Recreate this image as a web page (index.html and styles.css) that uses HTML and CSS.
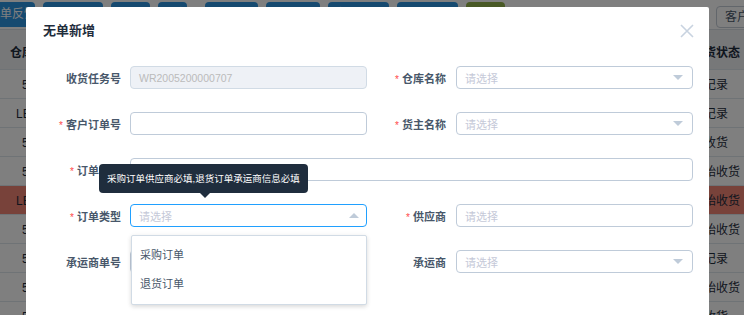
FILE: index.html
```html
<!DOCTYPE html>
<html lang="zh-CN">
<head>
    <meta charset="UTF-8">
    <meta name="viewport" content="width=device-width, initial-scale=1.0">
    <link rel="stylesheet" href="styles.css">
    <title>无单新增</title>
</head>

<body>
    <div class="page">
        <div class="toolbar">
            <div class="btns">
                <span class="btn btn-first">订单反馈</span>
                <span class="btn btn-w60">新增收货</span>
                <span class="btn btn-w39">编辑</span>
                <span class="btn btn-w29">删除</span>
                <span class="btn btn-w53 btn-far">无单新增</span>
                <span class="btn btn-w54">开始收货</span>
                <span class="btn btn-w61">完成收货</span>
                <span class="btn btn-w61">打印单据</span>
                <span class="btn btn-green">导出</span>
            </div>
            <span class="btn-plain">客户订单</span>
        </div>

        <table class="grid">
            <colgroup>
                <col class="col-first">
                <col>
                <col class="col-last">
            </colgroup>
            <thead>
                <tr><th class="c-first">仓库名称</th><th></th><th>收货状态</th></tr>
            </thead>
            <tbody>
                <tr><td class="c-five">5号仓库</td><td></td><td>记录</td></tr>
                <tr><td class="c-le">LE仓库</td><td></td><td>记录</td></tr>
                <tr><td class="c-five">5号仓库</td><td></td><td>收货</td></tr>
                <tr><td class="c-five">5号仓库</td><td></td><td>开始收货</td></tr>
                <tr class="row-warn"><td class="c-le">LE仓库</td><td></td><td>开始收货</td></tr>
                <tr><td class="c-five">5号仓库</td><td></td><td>开始收货</td></tr>
                <tr><td class="c-five">5号仓库</td><td></td><td>记录</td></tr>
                <tr><td class="c-five">5号仓库</td><td></td><td>开始收货</td></tr>
                <tr><td class="c-five">5号仓库</td><td></td><td>收货</td></tr>
            </tbody>
        </table>
    </div>

    <div class="mask"></div>

    <div class="dialog">
        <div class="dialog-header">
            <span class="dialog-title">无单新增</span>
            <svg class="close" width="14" height="14" viewBox="0 0 14 14">
                <path d="M1 1 L13 13 M13 1 L1 13" stroke="#c8d3e0" stroke-width="1.6" fill="none"/>
            </svg>
        </div>

        <form class="form">
            <label class="label">收货任务号</label>
            <div class="input disabled">WR2005200000707</div>
            <label class="label label-right req">仓库名称</label>
            <div class="input select"><span class="ph">请选择</span><i class="caret"></i></div>

            <label class="label req">客户订单号</label>
            <div class="input"></div>
            <label class="label label-right req">货主名称</label>
            <div class="input select"><span class="ph">请选择</span><i class="caret"></i></div>

            <label class="label req">订单备注</label>
            <div class="input span-3"></div>

            <label class="label req">订单类型</label>
            <div class="input select focus">
                <span class="ph">请选择</span><i class="caret caret-up"></i>
                <div class="tooltip">采购订单供应商必填,退货订单承运商信息必填</div>
                <ul class="dropdown">
                    <li>采购订单</li>
                    <li>退货订单</li>
                </ul>
            </div>
            <label class="label label-right req">供应商</label>
            <div class="input"><span class="ph">请选择</span></div>

            <label class="label">承运商单号</label>
            <div class="input"></div>
            <label class="label label-right">承运商</label>
            <div class="input select"><span class="ph">请选择</span><i class="caret"></i></div>
        </form>
    </div>
</body>
</html>
```

FILE: styles.css
```css
* {
    box-sizing: border-box;
}

body {
    margin: 0;
    width: 744px;
    height: 315px;
    overflow: hidden;
    background: #fff;
    font-family: "Liberation Sans", "Noto Sans CJK SC", sans-serif;
    color: #1f2d3d;
}

/* page behind the dialog */
.toolbar {
    display: flex;
    justify-content: space-between;
    align-items: flex-start;
    height: 30px;
    padding-top: 2px;
    border-bottom: 1px solid #d8dee5;
}

.btns {
    display: flex;
    gap: 8px;
    margin-left: -14px;
}

.btn {
    height: 25px;
    line-height: 25px;
    border-radius: 4px;
    background: #2c94e0;
    color: #fff;
    font-size: 12px;
    text-align: center;
    white-space: nowrap;
    overflow: hidden;
}

.btn-first {
    width: 49px;
    padding-left: 2px;
    text-align: left;
}

.btn-w60 { width: 60px; }
.btn-w39 { width: 39px; }
.btn-w29 { width: 29px; }
.btn-w53 { width: 53px; }
.btn-w54 { width: 54px; }
.btn-w61 { width: 61px; }
.btn-far { margin-left: 10px; }

.btn-green {
    width: 39px;
    background: #93b24a;
}

.btn-plain {
    margin-top: 4px;
    margin-right: -38px;
    height: 22px;
    line-height: 20px;
    padding: 0 8px;
    border: 1px solid #c4ccd6;
    border-radius: 4px;
    font-size: 12px;
    color: #48576a;
    white-space: nowrap;
}

.grid {
    width: 744px;
    table-layout: fixed;
    border-collapse: collapse;
    font-size: 12px;
}

.col-first { width: 90px; }
.col-last { width: 56px; }

.grid th {
    height: 39px;
    padding-top: 6px;
    background: #eef0f3;
    font-weight: bold;
    text-align: center;
    white-space: nowrap;
    border-bottom: 1px solid #dfe6ec;
}

.grid td {
    height: 29px;
    text-align: center;
    white-space: nowrap;
    border-bottom: 1px solid #dfe6ec;
}

.grid .c-first { text-align: left; padding-left: 10px; }
.grid .c-five { text-align: left; padding-left: 22px; }
.grid .c-le { text-align: left; padding-left: 16px; }

.row-warn td {
    background: #f08474;
}

.mask {
    position: fixed;
    inset: 0;
    background: rgba(0, 0, 0, 0.5);
}

/* dialog */
.dialog {
    position: absolute;
    left: 26px;
    top: 7px;
    width: 683px;
    height: 340px;
    background: #fff;
    border-radius: 2px;
}

.dialog-header {
    display: flex;
    justify-content: space-between;
    align-items: center;
    padding: 17px 15px 0 17px;
    height: 30px;
}

.dialog-title {
    font-size: 13px;
    line-height: 13px;
    font-weight: bold;
    color: #1f2d3d;
}

.form {
    display: grid;
    grid-template-columns: 87px 237px 89px 237px;
    grid-auto-rows: 23px;
    row-gap: 23px;
    padding: 29px 0 0 17px;
    margin: 0;
}

.label {
    padding: 2px 9px 0 0;
    text-align: right;
    line-height: 23px;
    font-size: 11px;
    font-weight: bold;
    color: #48576a;
    white-space: nowrap;
}

.label-right {
    padding-right: 10px;
}

.req::before {
    content: "*";
    color: #ff4949;
    margin-right: 3px;
    font-size: 10px;
    font-weight: normal;
}

.input {
    position: relative;
    display: flex;
    align-items: center;
    padding-left: 8px;
    border: 1px solid #bfcbd9;
    border-radius: 4px;
    background: #fff;
    font-size: 11px;
}

.span-3 {
    grid-column: 2 / 5;
}

.disabled {
    background: #eef1f6;
    border-color: #d1dbe5;
    color: #bbb;
    font-size: 10.5px;
}

.focus {
    border-color: #20a0ff;
}

.ph {
    color: #c5c9d8;
}

.caret {
    position: absolute;
    right: 9px;
    top: 8px;
    width: 0;
    height: 0;
    border-left: 5px solid transparent;
    border-right: 5px solid transparent;
    border-top: 5px solid #bfcbd9;
}

.caret-up {
    right: 7px;
    border-top: 0;
    border-bottom: 5px solid #bfcbd9;
}

.tooltip {
    position: absolute;
    left: -32px;
    top: -41px;
    height: 29px;
    line-height: 30px;
    padding: 0 8px;
    border-radius: 4px;
    background: #1f2d3d;
    color: #fff;
    font-size: 9.5px;
    font-weight: normal;
    white-space: nowrap;
    z-index: 3;
}

.tooltip::after {
    content: "";
    position: absolute;
    left: 101px;
    bottom: -5px;
    border-left: 5px solid transparent;
    border-right: 5px solid transparent;
    border-top: 5px solid #1f2d3d;
}

.dropdown {
    position: absolute;
    left: 0;
    top: 30px;
    width: 236px;
    margin: 0;
    padding: 5px 0;
    list-style: none;
    background: #fff;
    border: 1px solid #d1dbe5;
    border-radius: 2px;
    box-shadow: 0 2px 4px rgba(0, 0, 0, 0.12), 0 0 6px rgba(0, 0, 0, 0.04);
    z-index: 2;
}

.dropdown li {
    height: 29px;
    line-height: 29px;
    padding-left: 8px;
    font-size: 11px;
    color: #48576a;
}
```
